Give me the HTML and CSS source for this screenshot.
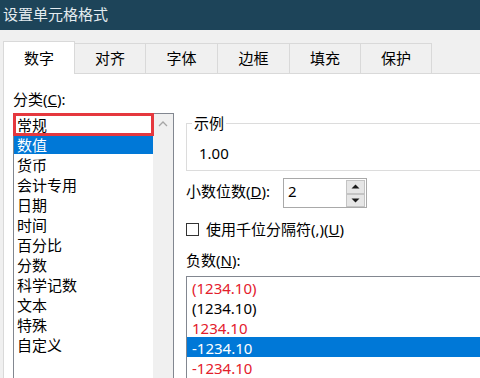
FILE: index.html
```html
<!DOCTYPE html>
<html lang="zh">
<head>
    <meta charset="UTF-8">
    <title>设置单元格格式</title>
    <link rel="stylesheet" href="styles.css">
</head>
<body>
<div class="dialog">

    <div class="titlebar">设置单元格格式</div>

    <div class="tabs">
        <div class="tab active">数字</div>
        <div class="tab">对齐</div>
        <div class="tab wide">字体</div>
        <div class="tab wide">边框</div>
        <div class="tab">填充</div>
        <div class="tab">保护</div>
    </div>

    <div class="panel">
        <div class="col-left">
            <div class="label">分类(<u>C</u>):</div>
            <div class="listbox cat-list">
                <div class="items">
                    <div class="item marked">常规</div>
                    <div class="item selected">数值</div>
                    <div class="item">货币</div>
                    <div class="item">会计专用</div>
                    <div class="item">日期</div>
                    <div class="item">时间</div>
                    <div class="item">百分比</div>
                    <div class="item">分数</div>
                    <div class="item">科学记数</div>
                    <div class="item">文本</div>
                    <div class="item">特殊</div>
                    <div class="item">自定义</div>
                </div>
                <div class="scrollbar">
                    <svg class="scroll-up" width="20" height="17" viewBox="0 0 20 17">
                        <path d="M6 12 L10 8 L14 12" fill="none" stroke="#a6a6a6" stroke-width="1.3"/>
                    </svg>
                </div>
            </div>
        </div>

        <div class="col-right">
            <fieldset class="sample">
                <legend>示例</legend>
                <div class="sample-value">1.00</div>
            </fieldset>

            <div class="spin-row">
                <span class="spin-label">小数位数(<u>D</u>):</span>
                <div class="spin">
                    <span class="spin-value">2</span>
                    <div class="spin-btns">
                        <div class="spin-btn">
                            <svg width="9" height="5" viewBox="0 0 9 5"><path d="M0.5 4.5 L4.5 0.5 L8.5 4.5 Z" fill="#1a1a1a"/></svg>
                        </div>
                        <div class="spin-btn">
                            <svg width="9" height="5" viewBox="0 0 9 5"><path d="M0.5 0.5 L4.5 4.5 L8.5 0.5 Z" fill="#1a1a1a"/></svg>
                        </div>
                    </div>
                </div>
            </div>

            <div class="check-row">
                <span class="checkbox"></span>
                <span>使用千位分隔符(,)(<u>U</u>)</span>
            </div>

            <div class="label neg-label">负数(<u>N</u>):</div>
            <div class="listbox neg-list">
                <div class="item red">(1234.10)</div>
                <div class="item">(1234.10)</div>
                <div class="item red">1234.10</div>
                <div class="item selected">-1234.10</div>
                <div class="item red">-1234.10</div>
            </div>
        </div>
    </div>

</div>
</body>
</html>
```
FILE: styles.css
```css
body {
    margin: 0;
    padding: 0;
    width: 480px;
    height: 378px;
    overflow: hidden;
    background-color: #f0f0f0;
    font-family: "Noto Sans", "Noto Sans CJK SC", sans-serif;
    font-size: 15px;
    color: #000;
}
.dialog {
    width: 480px;
    height: 378px;
    overflow: hidden;
}
.titlebar {
    height: 30px;
    line-height: 28px;
    padding-left: 3px;
    background-color: #1d4459;
    color: #e4ebef;
}

/* tabs */
.tabs {
    display: flex;
    margin-top: 11px;
    padding-left: 3px;
    align-items: flex-end;
    position: relative;
    z-index: 1;
}
.tab {
    width: 72px;
    height: 30px;
    box-sizing: border-box;
    line-height: 28px;
    text-align: center;
    border: 1px solid #d9d9d9;
    border-bottom: none;
    margin-left: -1px;
}
.tab.wide {
    width: 73px;
}
.tab:first-child {
    margin-left: 0;
}
.tab.active {
    height: 33px;
    line-height: 32px;
    margin-bottom: -1px;
    background-color: #fff;
    position: relative;
}

.panel {
    display: flex;
    margin-left: 3px;
    height: 320px;
    background-color: #fff;
    border-top: 1px solid #d9d9d9;
    border-left: 1px solid #d9d9d9;
}
.label {
    line-height: 20px;
}
.col-left {
    padding-left: 9px;
    padding-top: 15px;
    width: 161px;
    flex-shrink: 0;
}
.col-right {
    margin-left: 12px;
    width: 330px;
    flex-shrink: 0;
}

/* list boxes */
.listbox {
    border: 1px solid #828790;
    background-color: #fff;
}
.item {
    height: 20px;
    line-height: 18px;
    padding-top: 2px;
    box-sizing: border-box;
    white-space: nowrap;
}
.item.selected {
    background-color: #0078d7;
    color: #fff;
}
.item.red {
    color: #e3202c;
}
.cat-list {
    margin-top: 4px;
    height: 300px;
    display: flex;
}
.cat-list .items {
    flex: 1;
}
.cat-list .item {
    padding-left: 3px;
}
.item.marked {
    position: relative;
}
.item.marked::after {
    content: "";
    position: absolute;
    left: -1px;
    right: -1px;
    top: -1px;
    bottom: -2px;
    border: 3px solid #e5383e;
}
.scrollbar {
    width: 20px;
    background-color: #f0f0f0;
}
.scroll-up {
    display: block;
}

/* sample group */
.sample {
    margin: 39px 0 0 0;
    padding: 10px 0 7px 5px;
    border: 1px solid #dcdcdc;
    width: 320px;
    min-width: 0;
}
.sample legend {
    padding: 0 2px;
    line-height: 20px;
}
.sample-value {
    margin-left: 7px;
    line-height: 20px;
}

/* decimal places */
.spin-row {
    display: flex;
    align-items: center;
    margin-top: 7px;
    height: 30px;
}
.spin-label {
    width: 97px;
    line-height: 20px;
    margin-top: -4px;
}
.spin {
    width: 84px;
    height: 30px;
    box-sizing: border-box;
    border: 1px solid #a9a9a9;
    display: flex;
    align-items: center;
    justify-content: space-between;
}
.spin-value {
    padding-left: 4px;
    line-height: 20px;
    margin-top: -4px;
}
.spin-btns {
    display: flex;
    flex-direction: column;
    margin-right: 1px;
}
.spin-btn {
    width: 19px;
    height: 14px;
    box-sizing: border-box;
    background-color: #e6e6e6;
    border: 1px solid #c4c4c4;
    display: flex;
    align-items: center;
    justify-content: center;
}
.spin-btn + .spin-btn {
    height: 13px;
}

/* thousands separator */
.check-row {
    display: flex;
    align-items: center;
    margin-top: 11px;
    height: 20px;
    line-height: 20px;
}
.checkbox {
    width: 13px;
    height: 13px;
    box-sizing: border-box;
    border: 1px solid #333;
    background-color: #fff;
    margin-right: 7px;
}

.neg-label {
    margin-top: 11px;
}
.neg-list {
    margin-top: 6px;
    width: 320px;
    height: 120px;
}
.neg-list .item {
    padding-left: 5px;
}
```
